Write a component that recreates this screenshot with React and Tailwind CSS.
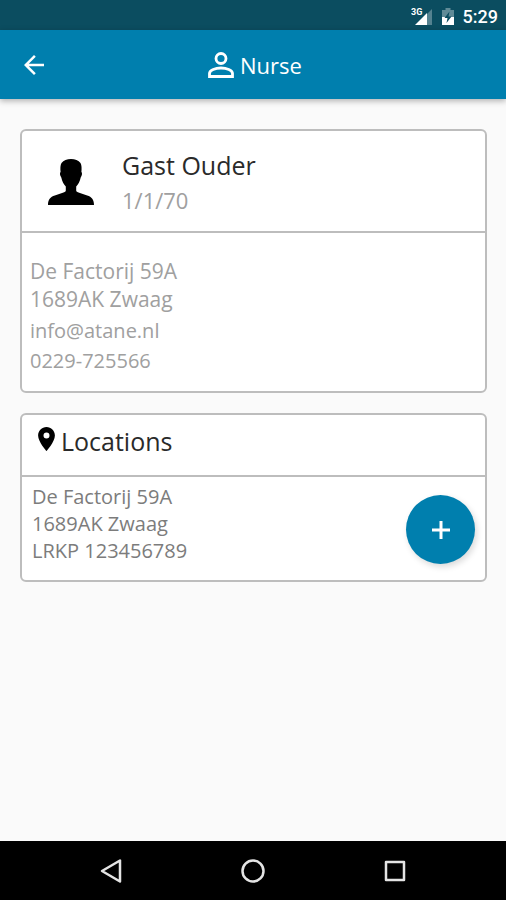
import React from "react";

const child = {
  name: "Gast Ouder",
  birthday: "1/1/70",
  street: "De Factorij 59A",
  city: "1689AK Zwaag",
  email: "info@atane.nl",
  phone: "0229-725566",
};

const locations = [
  { street: "De Factorij 59A", city: "1689AK Zwaag", lrkp: "LRKP 123456789" },
];

// ----------------- Icons -----------------
const SignalIcon = () => (
  <svg viewBox="0 0 22 20" className="h-5 w-[22px]" fill="white" aria-hidden="true">
    <path d="M21 2v16H5z" opacity="0.3" />
    <path d="M16 6v12H4z" />
    <text x="0" y="8" fontSize="9" fontWeight="700" fontFamily="Roboto, sans-serif">
      3G
    </text>
  </svg>
);

const BatteryIcon = () => (
  <svg viewBox="0 0 14 20" className="h-5 w-[14px]" aria-hidden="true">
    <path d="M4.500 1h5v2H13v8H1V3h3.500z" fill="white" opacity="0.35" />
    <path d="M1 10h12v8H1z" fill="white" />
    <path d="M8.500 4.500 3.500 11h3l-1 5 5-6.500h-3z" fill="#0b4d60" />
  </svg>
);

const BackArrowIcon = () => (
  <svg viewBox="4 4 16 16" className="size-5" fill="white" aria-hidden="true">
    <path d="M20 11H7.830l5.590-5.590L12 4l-8 8 8 8 1.410-1.410L7.830 13H20v-2z" />
  </svg>
);

const PersonIcon = () => (
  <svg viewBox="0 0 26 26" className="size-[26px]" fill="none" stroke="white" strokeWidth="2.800" aria-hidden="true">
    <circle cx="13" cy="6.500" r="5" />
    <path d="M1.500 24.500v-3c0-3.500 6-5.500 11.500-5.500s11.500 2 11.500 5.500v3z" />
  </svg>
);

const AvatarIcon = () => (
  <svg viewBox="0 0 46 46" className="size-[46px]" fill="black" aria-hidden="true">
    <path d="M23 0c4 0 7.500 1.200 9.500 4 1.200 2 1.300 5.500.9 9 1 .5.800 3.500-.7 5.500-.8 4-2.500 7-4.500 9v4c0 1 1 1.700 3 2.300l8 2.700c4.500 1.500 6.800 4 6.800 9.500H0c0-5.500 2.300-8 6.800-9.500l8-2.700c2-.6 3-1.300 3-2.300v-4c-2-2-3.700-5-4.500-9-1.500-2-1.700-5-.7-5.500-.4-3.500-.3-7 .9-9C15.500 1.200 19 0 23 0z" />
  </svg>
);

const PinIcon = () => (
  <svg viewBox="5 2 14 20" className="mb-1 h-6 w-[17px]" fill="black" aria-hidden="true">
    <path d="M12 2C8.130 2 5 5.130 5 9c0 5.250 7 13 7 13s7-7.750 7-13c0-3.870-3.130-7-7-7zm0 9.500a2.500 2.500 0 0 1 0-5 2.500 2.500 0 0 1 0 5z" />
  </svg>
);

const PlusIcon = () => (
  <svg viewBox="0 0 18 18" className="size-[18px]" fill="none" stroke="white" strokeWidth="3" aria-hidden="true">
    <path d="M9 0v18M0 9h18" />
  </svg>
);

const NavButton = ({ label, children }) => (
  <button type="button" aria-label={label} className="p-2">
    <svg viewBox="0 0 26 26" className="size-[26px]" fill="none" stroke="#e4e4e4" strokeWidth="2.500" strokeLinejoin="round" aria-hidden="true">
      {children}
    </svg>
  </button>
);

// ----------------- Layout pieces -----------------
const Card = ({ children }) => (
  <section className="rounded-md border-2 border-[#bdbdbd] bg-white">{children}</section>
);

const StatusBar = () => (
  <div className="flex h-[30px] items-center justify-end bg-[#0b4d60] pt-1 pr-2 text-white">
    <SignalIcon />
    <span className="ml-2 flex">
      <BatteryIcon />
    </span>
    <span className="ml-2 font-[Roboto,sans-serif] text-lg leading-6 font-medium">5:29</span>
  </div>
);

const Header = () => (
  <header className="grid h-[69px] grid-cols-[1fr_auto_1fr] items-center bg-[#007fae] px-4 text-white shadow-[0_2px_6px_rgba(0,0,0,0.3)]">
    <button type="button" aria-label="Back" className="justify-self-start p-2">
      <BackArrowIcon />
    </button>
    <h1 className="flex items-center gap-[6px] pl-1 text-[22px] leading-8">
      <PersonIcon />
      Nurse
    </h1>
  </header>
);

function App() {
  return (
    <div className="flex min-h-screen flex-col bg-[#fafafa] font-['Open_Sans',sans-serif]">
      <StatusBar />
      <Header />

      <main className="flex flex-1 flex-col gap-5 py-[30px] pr-[19px] pl-5">
        <Card>
          <div className="flex items-center border-b-2 border-[#bdbdbd] px-[26px] pt-4 pb-[14px]">
            <AvatarIcon />
            <div className="ml-7">
              <h2 className="text-[25px] leading-9 text-[#2a2a2a]">{child.name}</h2>
              <p className="text-[22px] leading-[34px] text-[#a0a0a0]">{child.birthday}</p>
            </div>
          </div>
          <address className="px-2 pt-6 pb-4 text-[#a0a0a0] not-italic">
            <p className="text-[21px] leading-7">{child.street}</p>
            <p className="text-[21px] leading-7">{child.city}</p>
            <p className="mt-1 text-xl leading-7">
              <a href="mailto:info@atane.nl">{child.email}</a>
            </p>
            <p className="mt-[2px] text-xl leading-7">
              <a href="tel:0229725566">{child.phone}</a>
            </p>
          </address>
        </Card>

        <Card>
          <div className="flex items-center gap-[6px] border-b-2 border-[#bdbdbd] px-4 pt-2 pb-4">
            <PinIcon />
            <h2 className="text-[25px] leading-9 text-[#2a2a2a]">Locations</h2>
          </div>
          <div className="flex items-start justify-between px-[10px] pt-[6px] pb-4">
            <ul className="text-xl leading-[27px] text-[#7c7c7c]">
              {locations.map((l) => (
                <li key={l.lrkp}>
                  <p>{l.street}</p>
                  <p>{l.city}</p>
                  <p>{l.lrkp}</p>
                </li>
              ))}
            </ul>
            <button
              type="button"
              aria-label="Add location"
              className="mt-3 flex size-[69px] items-center justify-center rounded-full bg-[#007fae] shadow-[2px_3px_6px_rgba(0,0,0,0.15)]"
            >
              <PlusIcon />
            </button>
          </div>
        </Card>
      </main>

      <nav className="flex h-[59px] items-center justify-around bg-black px-10">
        <NavButton label="Back">
          <path d="M22 2.500v21L4 13z" />
        </NavButton>
        <NavButton label="Home">
          <circle cx="13" cy="13" r="10.500" />
        </NavButton>
        <NavButton label="Recent apps">
          <path d="M4 4h18v18H4z" />
        </NavButton>
      </nav>
    </div>
  );
}

export default App;
